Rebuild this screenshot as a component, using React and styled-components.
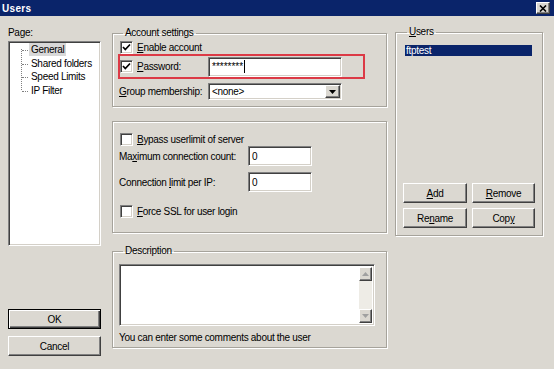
import React from "react";
import styled, { createGlobalStyle, css } from "styled-components";

const GlobalStyle = createGlobalStyle`
  html, body {
    margin: 0;
    padding: 0;
  }
  body {
    font-family: "Liberation Sans", Arial, sans-serif;
    font-size: 10px;
    letter-spacing: -0.3px;
    color: #000;
    background: #dbd8d1;
  }
`;

const raised = css`
  background: #dbd8d1;
  border: 1px solid;
  border-color: #fff #404040 #404040 #fff;
  box-shadow: inset -1px -1px 0 #808080;
`;

const sunken = css`
  background: #fff;
  border: 1px solid;
  border-color: #808080 #fff #fff #808080;
  box-shadow: inset 1px 1px 0 #404040, inset -1px -1px 0 #d4d0c8;
`;

const Window = styled.div`
  width: 554px;
  height: 369px;
  display: flex;
  flex-direction: column;
  background: #dbd8d1;
  overflow: hidden;
`;

const TitleBar = styled.div`
  flex: none;
  height: 16px;
  background: #0a246a;
  display: flex;
  align-items: center;
  justify-content: space-between;
  padding: 0 4px 0 2px;
`;

const Title = styled.span`
  color: #fff;
  font-weight: bold;
  font-size: 10px;
  letter-spacing: 0.3px;
`;

const CloseButton = styled.div`
  ${raised};
  box-sizing: border-box;
  width: 14px;
  height: 12px;
  display: flex;
  align-items: center;
  justify-content: center;
`;

const Body = styled.div`
  flex: 1;
  display: flex;
  padding: 10px 11px 13px 8px;
  min-height: 0;
`;

const LeftColumn = styled.div`
  width: 93px;
  margin-right: 11px;
  display: flex;
  flex-direction: column;
`;

const MiddleColumn = styled.div`
  width: 275px;
  margin-right: 8px;
  padding-top: 1px;
  display: flex;
  flex-direction: column;
`;

const RightColumn = styled.div`
  width: 148px;
  display: flex;
  flex-direction: column;
`;

const PageLabel = styled.div`
  line-height: 13px;
  margin-bottom: 2px;
`;

const Tree = styled.div`
  ${sunken};
  box-sizing: border-box;
  height: 205px;
  padding: 1px 0 0 1px;
`;

const TreeList = styled.ul`
  list-style: none;
  margin: 0;
  padding: 0;
  position: relative;

  &::before {
    content: "";
    position: absolute;
    left: 11px;
    top: 6px;
    bottom: 7px;
    border-left: 1px dotted #808080;
  }
`;

const TreeItem = styled.li`
  position: relative;
  height: 13.5px;
  line-height: 13.5px;
  padding-left: 19px;

  &::before {
    content: "";
    position: absolute;
    left: 12px;
    top: 7px;
    width: 6px;
    border-top: 1px dotted #808080;
  }
`;

const TreeText = styled.span`
  padding: 1px 2px;
  background: ${(p) => (p.$selected ? "#d8d8d8" : "transparent")};
`;

const DialogButtons = styled.div`
  margin-top: auto;
  display: flex;
  flex-direction: column;
  gap: 7px;
`;

const Button = styled.button`
  ${raised};
  box-sizing: border-box;
  height: 20px;
  width: 100%;
  padding: 0;
  font: inherit;
  letter-spacing: inherit;
  color: #000;
  cursor: default;

  ${(p) =>
    p.$default &&
    css`
      border: 1px solid #000;
      box-shadow: inset 1px 1px 0 #fff, inset -1px -1px 0 #404040,
        inset -2px -2px 0 #808080;
    `}
`;

const Group = styled.fieldset`
  box-sizing: border-box;
  margin: ${(p) => p.$top || 0}px 0 0 0;
  padding: ${(p) => p.$pad};
  min-width: 0;
  border: 1px solid #a6a39b;
  box-shadow: 1px 1px 0 #fff, inset 1px 1px 0 #fff;
  display: flex;
  flex-direction: column;
`;

const Legend = styled.legend`
  padding: 0 2px;
  margin-left: 4px;
  line-height: 12px;
`;

const CheckRow = styled.label`
  display: flex;
  align-items: center;
  gap: 4px;
  height: 13px;
  margin-top: ${(p) => p.$top || 0}px;
  padding-left: ${(p) => p.$indent || 0}px;
`;

const Box = styled.span`
  ${sunken};
  box-sizing: border-box;
  flex: none;
  width: 13px;
  height: 13px;
  display: flex;
  align-items: center;
  justify-content: center;
`;

const FieldRow = styled.div`
  display: grid;
  grid-template-columns: ${(p) => p.$label}px ${(p) => p.$field}px;
  align-items: center;
  margin-top: ${(p) => p.$top || 0}px;
`;

const HighlightRow = styled(FieldRow)`
  box-sizing: border-box;
  width: 247px;
  height: 25px;
  margin-left: -1px;
  border: 2px solid #dc3a46;
`;

const Field = styled.div`
  ${sunken};
  box-sizing: border-box;
  height: ${(p) => p.$h || 20}px;
  display: flex;
  align-items: center;
  padding: 0 2px 0 3px;
  letter-spacing: 0;
`;

const Caret = styled.span`
  width: 1px;
  height: 13px;
  background: #000;
  margin-left: 1px;
`;

const SelectText = styled.span`
  flex: 1;
  letter-spacing: -0.3px;
`;

const DropButton = styled.span`
  ${raised};
  box-sizing: border-box;
  width: 15px;
  height: 13px;
  margin-right: -1px;
  display: flex;
  align-items: center;
  justify-content: center;
`;

const TextArea = styled.div`
  ${sunken};
  box-sizing: border-box;
  height: 62px;
  width: 256px;
  display: flex;
  justify-content: flex-end;
  padding: 2px;
`;

const ScrollBar = styled.div`
  width: 13px;
  display: flex;
  flex-direction: column;
  justify-content: space-between;
  background: #eeece6;
`;

const ArrowButton = styled.span`
  ${raised};
  box-sizing: border-box;
  height: 14px;
  display: flex;
  align-items: center;
  justify-content: center;
`;

const Hint = styled.div`
  margin-top: 5px;
  line-height: 13px;
`;

const UserList = styled.div`
  height: 145px;
  padding: 7px 3px 0 2px;
  box-sizing: border-box;
`;

const UserItem = styled.div`
  height: 11px;
  line-height: 11px;
  padding-left: 1px;
  background: #0a246a;
  color: #fff;
`;

const ButtonGrid = styled.div`
  display: grid;
  grid-template-columns: 64px 63px;
  grid-auto-rows: 20px;
  gap: 5px;
`;

const Check = () => (
  <svg width="9" height="9" viewBox="0 0 9 9">
    <polyline points="1,4 3.3,6.5 8,1.5" fill="none" stroke="#000" strokeWidth="1.7" />
  </svg>
);

const Arrow = ({ up, color = "#000" }) => (
  <svg width="7" height="4" viewBox="0 0 7 4">
    <polygon points={up ? "0,4 7,4 3.5,0" : "0,0 7,0 3.5,4"} fill={color} />
  </svg>
);

const CheckBox = ({ checked, children, top, indent }) => (
  <CheckRow $top={top} $indent={indent}>
    <Box>{checked && <Check />}</Box>
    <span>{children}</span>
  </CheckRow>
);

const pages = ["General", "Shared folders", "Speed Limits", "IP Filter"];

export default function App() {
  return (
    <>
      <GlobalStyle />
      <Window>
        <TitleBar>
          <Title>Users</Title>
          <CloseButton>
            <svg width="8" height="7" viewBox="0 0 8 7">
              <path d="M1 0.5 L7 6.5 M7 0.5 L1 6.5" stroke="#000" strokeWidth="1.6" />
            </svg>
          </CloseButton>
        </TitleBar>
        <Body>
          <LeftColumn>
            <PageLabel>Page:</PageLabel>
            <Tree>
              <TreeList>
                {pages.map((page, i) => (
                  <TreeItem key={page}>
                    <TreeText $selected={i === 0}>{page}</TreeText>
                  </TreeItem>
                ))}
              </TreeList>
            </Tree>
            <DialogButtons>
              <Button $default>OK</Button>
              <Button>Cancel</Button>
            </DialogButtons>
          </LeftColumn>

          <MiddleColumn>
            <Group $pad="2px 6px 6px 6px">
              <Legend>Account settings</Legend>
              <CheckBox checked indent={1}>
                <u>E</u>nable account
              </CheckBox>
              <HighlightRow $label={88} $field={134}>
                <CheckRow>
                  <Box>
                    <Check />
                  </Box>
                  <span>
                    <u>P</u>assword:
                  </span>
                </CheckRow>
                <Field>
                  ********
                  <Caret />
                </Field>
              </HighlightRow>
              <FieldRow $label={89} $field={134} $top={4}>
                <span>
                  <u>G</u>roup membership:
                </span>
                <Field $h={17}>
                  <SelectText>&lt;none&gt;</SelectText>
                  <DropButton>
                    <Arrow />
                  </DropButton>
                </Field>
              </FieldRow>
            </Group>

            <Group $top={14} $pad="11px 6px 14px 6px">
              <CheckBox indent={1}>
                <u>B</u>ypass userlimit of server
              </CheckBox>
              <FieldRow $label={129} $field={64}>
                <span>
                  Ma<u>x</u>imum connection count:
                </span>
                <Field>0</Field>
              </FieldRow>
              <FieldRow $label={129} $field={64} $top={6}>
                <span>
                  Connection <u>l</u>imit per IP:
                </span>
                <Field>0</Field>
              </FieldRow>
              <CheckBox indent={1} top={13}>
                <u>F</u>orce SSL for user login
              </CheckBox>
            </Group>

            <Group $top={12} $pad="7px 6px 3px 6px">
              <Legend>Description</Legend>
              <TextArea>
                <ScrollBar>
                  <ArrowButton>
                    <Arrow up color="#a0a0a0" />
                  </ArrowButton>
                  <ArrowButton>
                    <Arrow color="#a0a0a0" />
                  </ArrowButton>
                </ScrollBar>
              </TextArea>
              <Hint>You can enter some comments about the user</Hint>
            </Group>
          </MiddleColumn>

          <RightColumn>
            <Group $pad="0 7px 7px 7px">
              <Legend>
                <u>U</u>sers
              </Legend>
              <UserList>
                <UserItem>ftptest</UserItem>
              </UserList>
              <ButtonGrid>
                <Button>
                  <u>A</u>dd
                </Button>
                <Button>
                  <u>R</u>emove
                </Button>
                <Button>
                  Re<u>n</u>ame
                </Button>
                <Button>
                  Cop<u>y</u>
                </Button>
              </ButtonGrid>
            </Group>
          </RightColumn>
        </Body>
      </Window>
    </>
  );
}
